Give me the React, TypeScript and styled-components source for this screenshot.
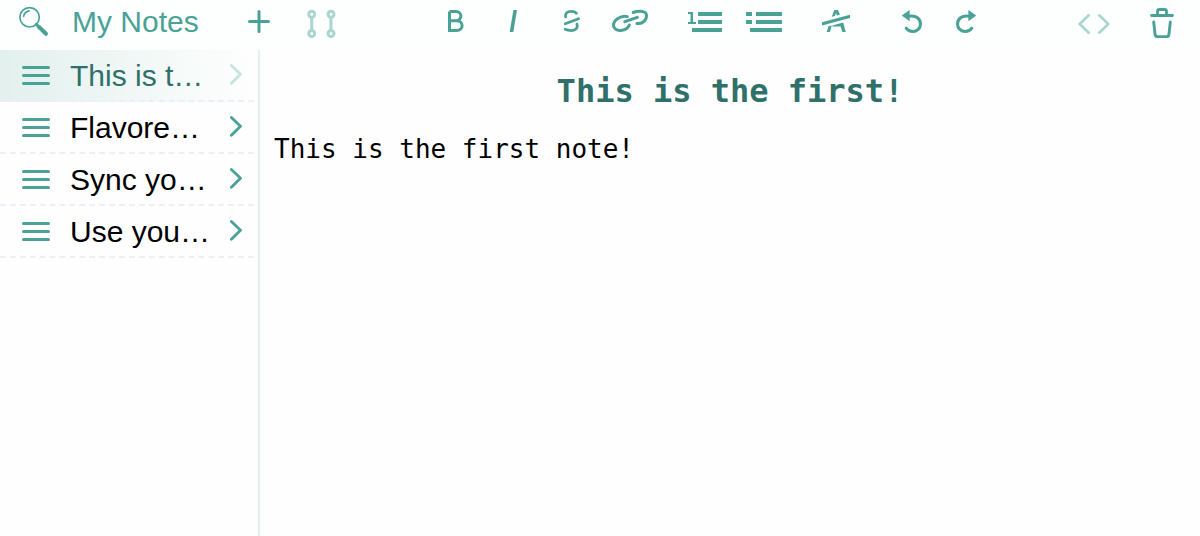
import React, { useState } from "react";
import styled, { createGlobalStyle } from "styled-components";

const accent = "#4aa296";
const accentDark = "#30706a";
const accentPale = "#a9d6ce";

const GlobalStyle = createGlobalStyle`
  * { box-sizing: border-box; }
  body {
    margin: 0;
    background: #fdfffe;
    font-family: "Liberation Sans", Arial, sans-serif;
  }
`;

const Page = styled.div`
  display: flex;
  flex-direction: column;
  min-height: 100vh;
`;

const Header = styled.header`
  display: flex;
  justify-content: space-between;
  height: 50px;
  padding: 0 26px 0 18px;
`;

const Group = styled.div<{ $gap: number }>`
  display: flex;
  gap: ${(p) => p.$gap}px;
`;

const AppTitle = styled.h1`
  margin: 0 26px 0 22px;
  width: 150px;
  font-size: 30px;
  font-weight: 400;
  line-height: 44px;
  color: ${accent};
  white-space: nowrap;
`;

const IconButton = styled.button<{ $tone?: string }>`
  display: block;
  flex: none;
  padding: 0;
  border: 0;
  background: none;
  color: ${(p) => p.$tone || accent};
  cursor: pointer;

  svg {
    display: block;
  }
`;

const Body = styled.div`
  display: flex;
  flex: 1;
`;

const Sidebar = styled.nav`
  flex: none;
  width: 260px;
  padding-right: 4px;
  border-right: 2px solid #e3f0ed;
  background: #fefefe;
`;

const NoteList = styled.ul`
  margin: 0;
  padding: 0;
  list-style: none;
`;

const NoteRow = styled.li<{ $active: boolean }>`
  display: flex;
  align-items: flex-start;
  height: 52px;
  padding-left: 22px;
  border-bottom: 2px dashed #eceff8;
  background: ${(p) => (p.$active ? "linear-gradient(to right, #e2f0ed, #fefefe)" : "none")};
`;

const NoteButton = styled.button<{ $active: boolean }>`
  display: flex;
  flex: 1;
  align-items: flex-start;
  justify-content: space-between;
  margin-left: 20px;
  padding: 0 12px 0 0;
  border: 0;
  background: none;
  font: 30px/52px "Liberation Sans", Arial, sans-serif;
  color: ${(p) => (p.$active ? accentDark : "#000")};
  white-space: nowrap;
  cursor: pointer;

  svg {
    flex: none;
    color: ${(p) => (p.$active ? "#c6e4de" : accent)};
  }
`;

const Editor = styled.main`
  flex: 1;
  padding: 22px 14px;
  background: #fefefe;
  font-family: "DejaVu Sans Mono", Menlo, monospace;
`;

const NoteHeading = styled.h2`
  margin: 0 0 24px;
  font-size: 32px;
  line-height: 38px;
  text-align: center;
  color: ${accentDark};
`;

const NoteText = styled.p`
  margin: 0;
  font-size: 26px;
  line-height: 30px;
  color: #000;
`;

type IconProps = { w: number; h?: number; stroke?: number; children: React.ReactNode };

const Icon = ({ w, h = 50, stroke = 3, children }: IconProps) => (
  <svg
    width={w}
    height={h}
    viewBox={`0 0 ${w} ${h}`}
    fill="none"
    stroke="currentColor"
    strokeWidth={stroke}
    strokeLinecap="round"
    strokeLinejoin="round"
    aria-hidden="true"
  >
    {children}
  </svg>
);

const SearchIcon = () => (
  <Icon w={32} stroke={1.7}>
    <circle cx="11.6" cy="17.3" r="9.7" />
    <path d="M5.6 16.2C6.2 13.6 8 11.6 11 10.9" />
    <path d="M18.3 24.3L20.3 26.2" strokeWidth="3" />
    <path d="M21 27L28 33.8" strokeWidth="4" />
  </Icon>
);

const PlusIcon = () => (
  <Icon w={22}>
    <path d="M11 11.5V31.5M1.5 21.5H20.5" />
  </Icon>
);

const SplitIcon = () => (
  <Icon w={48}>
    {[13.7, 33].map((x) => (
      <g key={x}>
        <circle cx={x} cy="14.3" r="3" />
        <circle cx={x} cy="33.5" r="3" />
        <path d={`M${x} 18V30`} />
      </g>
    ))}
  </Icon>
);

const BoldIcon = () => (
  <Icon w={36}>
    <path
      strokeLinecap="butt"
      strokeLinejoin="miter"
      d="M12.5 11.5V30.5H19.5C27 30.5 27 20.7 19.5 20.7H12.5M19 20.7C25.5 20.7 25.5 11.5 19 11.5H12.5"
    />
  </Icon>
);

const ItalicIcon = () => (
  <Icon w={36}>
    <path stroke="none" fill="currentColor" d="M18.4 10H22L18.3 32H14.7Z" />
  </Icon>
);

const StrikeIcon = () => (
  <Icon w={36} stroke={2.8}>
    <path d="M12.6 17C11.8 13.2 14.5 11.3 18 11.3C20.4 11.3 22.3 12 23.4 13.2" />
    <path d="M12.2 23.7L25.6 18.7" />
    <path d="M24 24C25.2 27.8 22.8 30.6 18.6 30.6C16 30.6 13.8 30.2 12.2 29.3" />
  </Icon>
);

const LinkIcon = () => (
  <Icon w={38} stroke={3}>
    <path d="M16.3 16.6C9.5 15.2 2.5 20.4 2.5 25.3C2.5 28.8 6 30.8 9.8 30.4C14 30 17.2 28 18.3 25" />
    <path d="M13.8 21.7L26.3 17.3" />
    <path d="M22.2 12.5C25 11.3 28.3 11.2 31.5 11.4C34.8 11.8 36.3 14.6 35.3 17.8C34 21.8 30.5 23.8 26 23.6" />
  </Icon>
);

const NumberedIcon = () => (
  <Icon w={36}>
    <path
      stroke="none"
      fill="currentColor"
      d="M1 12H6V22H9V24H1V22H3.5V14H1ZM11 12H35V16H11ZM11 20H35V24H11ZM5 28H35V32H5Z"
    />
  </Icon>
);

const BulletsIcon = () => (
  <Icon w={38}>
    <path
      stroke="none"
      fill="currentColor"
      d="M1 12H7V16H1ZM1 20H7V24H1ZM11 12H37V16H11ZM11 20H37V24H11ZM5 28H37V32H5Z"
    />
  </Icon>
);

const ClearFormatIcon = () => (
  <Icon w={32}>
    <path
      stroke="none"
      fill="currentColor"
      d="M1 22.3L29 14.8V18L1 25.6ZM13.3 10H16.8L19 14.6L16 15.4L15 13L13.9 16L10.8 16.8ZM7.6 26.2L10.8 25.4L8.9 32H5.6ZM11.3 25.4L18.5 23.5L22.2 22.6L24.8 32H21.4L19.5 26.6H11.3Z"
    />
  </Icon>
);

const TurnArrow = () => (
  <>
    <path d="M17.5 16.3C25.5 14.5 29.5 19.5 29.5 24C29.5 28.4 26 31.6 21.8 31.6C19 31.6 16.6 30.3 15.2 28.2" />
    <path stroke="none" fill="currentColor" d="M10.8 15.6L18.6 10V21.3Z" />
  </>
);

const UndoIcon = () => (
  <Icon w={40}>
    <TurnArrow />
  </Icon>
);

const RedoIcon = () => (
  <Icon w={40}>
    <g transform="matrix(-1 0 0 1 40 0)">
      <TurnArrow />
    </g>
  </Icon>
);

const CodeIcon = () => (
  <Icon w={32} stroke={2.6}>
    <path d="M10.7 15.3L1.7 24L10.7 32.7M21.3 15.3L30.3 24L21.3 32.7" />
  </Icon>
);

const TrashIcon = () => (
  <Icon w={24}>
    <path d="M1.5 15.5H22.5M7.5 15V11.5Q7.5 9.5 9.5 9.5H14.5Q16.5 9.5 16.5 11.5V15" strokeWidth="2.8" />
    <path d="M3.7 22L5 34Q5.3 36.6 7.5 36.6H16.5Q18.7 36.6 19 34L20.3 22" strokeWidth="2.9" />
  </Icon>
);

const GripIcon = () => (
  <Icon w={28}>
    <path d="M1.5 17.5H26.5M1.5 25.5H26.5M1.5 33.5H26.5" />
  </Icon>
);

const ChevronIcon = () => (
  <Icon w={12} stroke={2.8}>
    <path d="M1.4 15.5L10.5 24.3L1.4 33.3" />
  </Icon>
);

const notes = ["This is t…", "Flavore…", "Sync yo…", "Use you…"];

export default function App() {
  const [active, setActive] = useState(0);

  return (
    <Page>
      <GlobalStyle />
      <Header>
        <Group $gap={0}>
          <IconButton aria-label="Search"><SearchIcon /></IconButton>
          <AppTitle>My Notes</AppTitle>
          <Group $gap={28}>
            <IconButton aria-label="New note"><PlusIcon /></IconButton>
            <IconButton aria-label="Split view" $tone={accentPale}><SplitIcon /></IconButton>
          </Group>
        </Group>
        <Group $gap={38} role="toolbar" aria-label="Formatting">
          <Group $gap={22}>
            <IconButton aria-label="Bold"><BoldIcon /></IconButton>
            <IconButton aria-label="Italic"><ItalicIcon /></IconButton>
            <IconButton aria-label="Strikethrough"><StrikeIcon /></IconButton>
            <IconButton aria-label="Link"><LinkIcon /></IconButton>
          </Group>
          <Group $gap={22}>
            <IconButton aria-label="Numbered list"><NumberedIcon /></IconButton>
            <IconButton aria-label="Bulleted list"><BulletsIcon /></IconButton>
          </Group>
          <IconButton aria-label="Clear formatting"><ClearFormatIcon /></IconButton>
          <Group $gap={16}>
            <IconButton aria-label="Undo"><UndoIcon /></IconButton>
            <IconButton aria-label="Redo"><RedoIcon /></IconButton>
          </Group>
        </Group>
        <Group $gap={40}>
          <IconButton aria-label="View source" $tone={accentPale}><CodeIcon /></IconButton>
          <IconButton aria-label="Delete note"><TrashIcon /></IconButton>
        </Group>
      </Header>
      <Body>
        <Sidebar aria-label="Notes">
          <NoteList>
            {notes.map((title, i) => (
              <NoteRow key={title} $active={i === active}>
                <IconButton aria-label={`Move ${title}`}><GripIcon /></IconButton>
                <NoteButton $active={i === active} onClick={() => setActive(i)}>
                  {title}
                  <ChevronIcon />
                </NoteButton>
              </NoteRow>
            ))}
          </NoteList>
        </Sidebar>
        <Editor>
          <NoteHeading>This is the first!</NoteHeading>
          <NoteText>This is the first note!</NoteText>
        </Editor>
      </Body>
    </Page>
  );
}
